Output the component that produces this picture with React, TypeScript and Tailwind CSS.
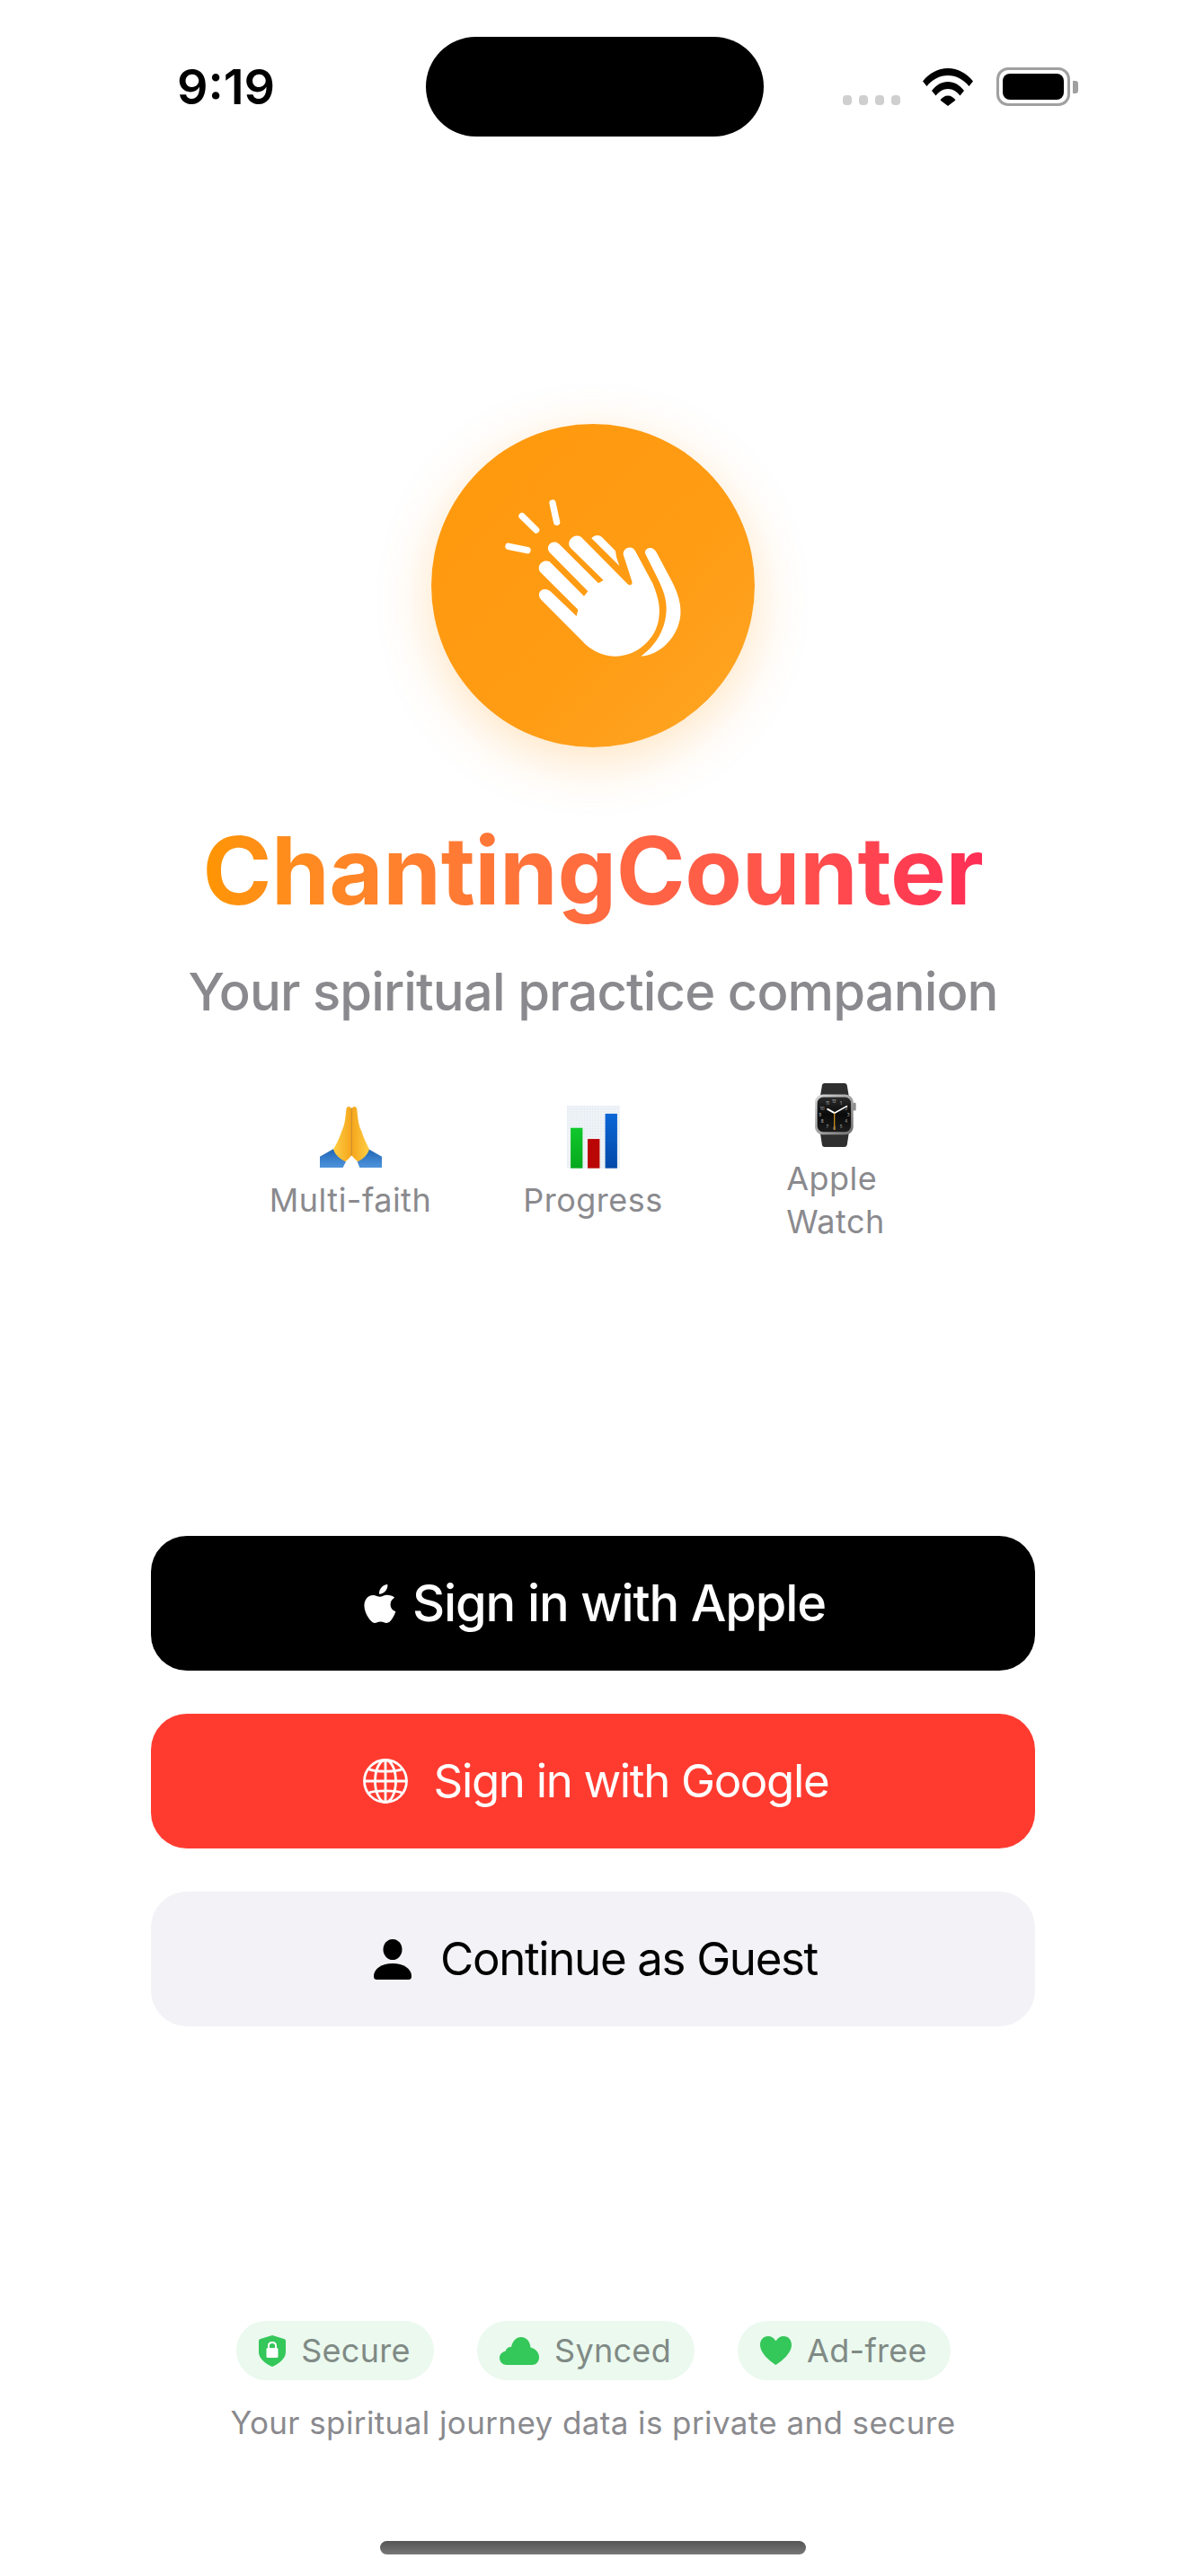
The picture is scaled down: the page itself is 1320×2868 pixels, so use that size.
import React from "react";

function ClapIcon() {
  return (
    <svg viewBox="120 96 1080 1080" className="w-[360px] h-[360px]">
      <g stroke="#fff" strokeWidth="22" strokeLinecap="round">
        <line x1="378" y1="505" x2="441" y2="518" />
        <line x1="423" y1="404" x2="470" y2="450" />
        <line x1="525" y1="360" x2="539" y2="424" />
      </g>
      <path
        fill="#fff"
        d="M487 683C470 665 485 640 510 650C514 652 517 654 520 657L605 738L610 716L485 592C468 572 492 545 515 556L630 671L643 655L515 525C498 505 525 478 547 497L678 628L695 618L585 510C568 490 595 460 620 473L775 630C782 638 794 634 790 622L762 535C755 512 790 495 802 522L860 630C880 680 885 710 880 745C870 820 800 875 730 872C690 872 650 850 625 822Z"
      />
      <path fill="#fff" d="M655 478C668 464 682 466 692 476L735 520L738 540L748 570Z" />
      <path
        fill="#fff"
        d="M835 530C828 512 858 498 872 525L925 625C945 665 955 700 952 735C945 810 880 870 820 872C870 835 905 780 905 710C905 670 885 630 870 600Z"
      />
    </svg>
  );
}

function PrayEmoji() {
  return (
    <svg viewBox="45 105 207 207" className="w-[69px] h-[69px]">
      <defs>
        <linearGradient id="sleeve" x1="0" y1="0" x2="0" y2="1">
          <stop offset="0" stopColor="#1f66b5" />
          <stop offset="1" stopColor="#4f94dc" />
        </linearGradient>
        <linearGradient id="handL" x1="0" y1="0" x2="1" y2="0">
          <stop offset="0" stopColor="#ffcf45" />
          <stop offset="1" stopColor="#f5a61c" />
        </linearGradient>
        <linearGradient id="handR" x1="1" y1="0" x2="0" y2="0">
          <stop offset="0" stopColor="#ffcf45" />
          <stop offset="1" stopColor="#f5a61c" />
        </linearGradient>
      </defs>
      <path fill="url(#sleeve)" d="M45 275L90 250L132 292L122 312H45Z" />
      <path fill="url(#sleeve)" d="M252 275L207 250L170 292L178 312H252Z" />
      <path fill="url(#handL)" d="M150 118C148 105 135 105 133 118C130 150 128 170 118 190C110 215 100 235 90 250C95 270 115 285 130 292C138 285 145 278 150 272Z" />
      <path fill="url(#handR)" d="M152 118C154 105 167 105 169 118C172 150 174 170 184 190C192 215 202 235 210 250C205 270 187 285 172 292C164 285 157 278 152 272Z" />
      <path stroke="#c9821a" strokeWidth="3" fill="none" d="M151 112V272" />
    </svg>
  );
}

function ChartEmoji() {
  return (
    <svg viewBox="725 152 115 204" preserveAspectRatio="none" className="w-[59px] h-[70px]">
      <defs>
        <pattern id="grid" width="6" height="9" patternUnits="userSpaceOnUse">
          <rect width="6" height="9" fill="#f0f4f8" />
          <path d="M0 0H6M0 0V9" stroke="#d3e0ea" strokeWidth="1" fill="none" />
        </pattern>
        <linearGradient id="green" x1="0" y1="0" x2="0" y2="1">
          <stop offset="0" stopColor="#10c82c" />
          <stop offset="1" stopColor="#06a81c" />
        </linearGradient>
        <linearGradient id="blue" x1="0" y1="0" x2="0" y2="1">
          <stop offset="0" stopColor="#0b66d6" />
          <stop offset="1" stopColor="#0449a8" />
        </linearGradient>
      </defs>
      <rect x="725" y="152" width="115" height="204" fill="url(#grid)" />
      <rect x="733" y="224" width="26" height="131" fill="url(#green)" />
      <rect x="770" y="260" width="26" height="95" fill="#bb0606" />
      <rect x="808" y="178" width="26" height="177" fill="url(#blue)" />
    </svg>
  );
}

function WatchEmoji() {
  const nums: [string, number, number][] = [
    ["12", 87, 94],
    ["1", 110, 100],
    ["2", 128, 118],
    ["3", 135, 140],
    ["4", 128, 163],
    ["5", 111, 180],
    ["6", 88, 186],
    ["7", 64, 180],
    ["8", 47, 163],
    ["9", 39, 140],
    ["10", 47, 118],
    ["11", 65, 100],
  ];
  return (
    <svg viewBox="22 32 140 216" className="w-[46px] h-[71px]">
      <defs>
        <linearGradient id="steel" x1="0" y1="0" x2="1" y2="1">
          <stop offset="0" stopColor="#dcdcdc" />
          <stop offset="1" stopColor="#6e6e6e" />
        </linearGradient>
        <linearGradient id="face" x1="0" y1="0" x2="0" y2="1">
          <stop offset="0" stopColor="#2c2c2c" />
          <stop offset="0.5" stopColor="#0a0a0a" />
          <stop offset="1" stopColor="#1c1c1c" />
        </linearGradient>
      </defs>
      <path fill="#2f2f2f" d="M46 40C46 35 50 32 55 32H122C127 32 130 35 131 40L137 76H40Z" />
      <path fill="#2f2f2f" d="M40 200H137L131 240C130 245 127 248 122 248H55C50 248 46 245 46 240Z" />
      <rect x="150" y="98" width="11" height="27" rx="3" fill="#8f8f8f" />
      <rect x="22" y="70" width="130" height="136" rx="26" fill="url(#steel)" />
      <rect x="30" y="79" width="114" height="118" rx="20" fill="url(#face)" />
      {nums.map(([t, x, y]) => (
        <text key={t} x={x} y={y} fontSize="14" textAnchor="middle" dominantBaseline="middle" fill="#b9b9b9" fontFamily="Inter, sans-serif">
          {t}
        </text>
      ))}
      <line x1="88" y1="133" x2="65" y2="120" stroke="#fff" strokeWidth="6" strokeLinecap="round" />
      <line x1="88" y1="133" x2="130" y2="110" stroke="#fff" strokeWidth="5" strokeLinecap="round" />
      <line x1="88" y1="133" x2="88" y2="190" stroke="#c88a1e" strokeWidth="4" />
    </svg>
  );
}

function AppleIcon() {
  return (
    <svg viewBox="0 0 36 44" className="w-[36px] h-[43px] shrink-0">
      <path
        fill="#fff"
        d="M26.500 0C26.800 3 25.700 5.800 24 7.800C22.300 9.800 19.600 11.300 17 11.100C16.600 8.200 18 5.200 19.500 3.500C21.200 1.500 24.200 0.200 26.500 0ZM34.500 15C31 17.100 29.800 20.100 29.800 23C29.800 26.800 32 29.600 35.800 31C34.800 34 33.400 36.800 31.600 39.400C29.900 41.800 28 44 25.400 44C22.800 44 22 42.500 18.600 42.500C15.200 42.500 14.200 44 11.800 44C9.200 44 7.200 41.500 5.400 39C2 34.200 0 28.600 0 24C0 17 4.600 12.200 10.200 12.200C13 12.200 15.400 14 17.800 14C20 14 22.800 12 26 12C28.800 12 32.300 12.800 34.500 15Z"
      />
    </svg>
  );
}

function GlobeIcon() {
  return (
    <svg viewBox="0 0 50 50" fill="none" stroke="#fff" strokeWidth="2.800" className="w-[50px] h-[50px] shrink-0">
      <circle cx="25" cy="25" r="23.500" />
      <ellipse cx="25" cy="25" rx="11.500" ry="23.500" />
      <line x1="25" y1="1.500" x2="25" y2="48.500" />
      <line x1="1.500" y1="25" x2="48.500" y2="25" />
      <path d="M6 11.500C12 15 38 15 44 11.500" />
      <path d="M6 38.500C12 35 38 35 44 38.500" />
    </svg>
  );
}

function PersonIcon() {
  return (
    <svg viewBox="0 0 42 45" className="w-[42px] h-[45px] shrink-0">
      <ellipse cx="21" cy="11.500" rx="10.500" ry="11.500" fill="#000" />
      <path fill="#000" d="M0 41C0 33 9 27 21 27C33 27 42 33 42 41C42 44 41 45 38 45H4C1 45 0 44 0 41Z" />
    </svg>
  );
}

function ShieldIcon() {
  return (
    <svg viewBox="0 0 30 35" className="w-[30px] h-[35px] shrink-0">
      <path fill="#34C759" d="M15 0L28 4C29 4.300 30 5 30 6.500V19C30 26 22 32 15 35C8 32 0 26 0 19V6.500C0 5 1 4.300 2 4Z" />
      <rect x="8.500" y="14" width="13" height="11" rx="1.500" fill="#fff" />
      <path d="M11 14.500V11.500C11 9.200 12.800 8 15 8C17.200 8 19 9.200 19 11.500V14.500" stroke="#fff" strokeWidth="2" fill="none" />
    </svg>
  );
}

function CloudIcon() {
  return (
    <svg viewBox="0 0 44 31" className="w-[44px] h-[31px] shrink-0">
      <path
        fill="#34C759"
        d="M8 31C3.500 31 0 27.800 0 23.300C0 19.400 2.800 16.300 6.500 15.700C7.500 12.300 10 10.800 13 11C14.500 4.500 18.500 0 24 0C30 0 34 5 34.500 11.500C40 13 44 17 44 22.500C44 27.800 40.500 31 36 31Z"
      />
    </svg>
  );
}

function HeartIcon() {
  return (
    <svg viewBox="0 0 35 32" className="w-[35px] h-[32px] shrink-0">
      <path
        fill="#34C759"
        d="M17.500 32C14 29.500 0 20.500 0 9.500C0 4 3.800 0 8.800 0C12.500 0 15.800 2 17.500 5.500C19.200 2 22.500 0 26.200 0C31.200 0 35 4 35 9.500C35 20.500 21 29.500 17.500 32Z"
      />
    </svg>
  );
}

function Feature({ icon, label, wrap }: { icon: React.ReactNode; label: React.ReactNode; wrap?: boolean }) {
  return (
    <div className="w-[270px] flex flex-col items-center">
      <div className="h-[70px] flex items-center justify-center">{icon}</div>
      <div
        className={
          wrap
            ? "mt-[12px] text-left text-[36px] leading-[48px] tracking-[0.5px] text-[#8a8a8e]"
            : "mt-[11px] text-center text-[36px] leading-[48px] tracking-[0.5px] text-[#8a8a8e]"
        }
      >
        {label}
      </div>
    </div>
  );
}

function Chip({ icon, label, w }: { icon: React.ReactNode; label: string; w: string }) {
  return (
    <div className={`${w} h-[66px] rounded-[33px] bg-[#ebf9ef] flex items-center justify-center gap-[17px] text-[36px] tracking-[0.3px] text-[#808a85]`}>
      {icon}
      <span>{label}</span>
    </div>
  );
}

export default function App() {
  return (
    <div className="w-[1320px] h-[2868px] bg-white flex flex-col items-center font-[Inter,sans-serif] overflow-hidden">
      {/* Status bar */}
      <div className="w-full h-[152px] pt-[41px] flex items-start">
        <div className="w-[474px] pl-[197px] pt-[29px] text-[54px] leading-[54px] font-semibold text-black">9:19</div>
        <div className="w-[376px] h-[111px] rounded-[56px] bg-black" />
        <div className="ml-[88px] mt-[34px] flex items-end">
          <div className="flex gap-[8px] pb-[1px]">
            <div className="w-[10px] h-[11px] rounded-[4px] bg-[#cfcfcf]" />
            <div className="w-[10px] h-[11px] rounded-[4px] bg-[#cfcfcf]" />
            <div className="w-[10px] h-[11px] rounded-[4px] bg-[#cfcfcf]" />
            <div className="w-[10px] h-[11px] rounded-[4px] bg-[#cfcfcf]" />
          </div>
          <svg viewBox="0 0 56 42" className="ml-[25px] w-[56px] h-[42px]">
            <path fill="#000" d="M0 14.500C7 5.500 17 0 28 0C39 0 49 5.500 56 14.500L51.500 20C45.500 12.500 37 8 28 8C19 8 10.500 12.500 4.500 20Z" />
            <path fill="#000" d="M10 25C15 18.500 21 15 28 15C35 15 41 18.500 46 25L41.500 30.500C38 26 33.500 23 28 23C22.500 23 18 26 14.500 30.500Z" />
            <path fill="#000" d="M19.500 35.500C21.500 32.500 24.500 30.500 28 30.500C31.500 30.500 34.500 32.500 36.500 35.500L28 42Z" />
          </svg>
          <div className="ml-[26px] flex items-center">
            <div className="w-[82px] h-[43px] rounded-[13px] border-[3px] border-[#a0a0a0] p-[4px]">
              <div className="w-full h-full rounded-[8px] bg-black" />
            </div>
            <div className="ml-[3px] w-[6px] h-[14px] rounded-r-[3px] bg-[#a0a0a0]" />
          </div>
        </div>
      </div>

      {/* Hero */}
      <div className="mt-[320px] w-[360px] h-[360px] rounded-full bg-gradient-to-br from-[#FF990C] via-[#FF9C14] via-60% to-[#FFA624] shadow-[0_15px_60px_rgba(255,149,0,0.25)]">
        <ClapIcon />
      </div>
      <h1 className="mt-[74px] text-[104px] leading-[126px] font-bold tracking-[-0.4px] bg-gradient-to-r from-[#FF9500] to-[#FF2D55] bg-clip-text text-transparent">
        ChantingCounter
      </h1>
      <p className="mt-[36px] text-[58px] leading-[72px] font-medium tracking-[-0.9px] text-[#8a8a8e]">Your spiritual practice companion</p>

      {/* Features */}
      <div className="mt-[66px] flex items-center">
        <Feature icon={<PrayEmoji />} label="Multi-faith" />
        <Feature icon={<ChartEmoji />} label="Progress" />
        <Feature
          wrap
          icon={<WatchEmoji />}
          label={
            <>
              Apple
              <br />
              Watch
            </>
          }
        />
      </div>

      {/* Buttons */}
      <div className="mt-[326px] w-[984px] flex flex-col gap-[48px]">
        <button className="h-[150px] pl-[4px] rounded-[40px] bg-black flex items-center justify-center gap-[18px] text-white text-[56px] tracking-[-1.15px] font-medium">
          <AppleIcon />
          <span>Sign in with Apple</span>
        </button>
        <button className="h-[150px] pl-[6px] rounded-[40px] bg-[#FF3B30] flex items-center justify-center gap-[29px] text-white text-[51px] tracking-[-1.35px]">
          <GlobeIcon />
          <span>Sign in with Google</span>
        </button>
        <button className="h-[150px] pl-[6px] rounded-[40px] bg-[#F2F2F7] flex items-center justify-center gap-[32px] text-black text-[51px] tracking-[-1.35px]">
          <PersonIcon />
          <span>Continue as Guest</span>
        </button>
      </div>

      {/* Footer */}
      <div className="mt-[328px] flex gap-[48px]">
        <Chip icon={<ShieldIcon />} label="Secure" w="w-[220px]" />
        <Chip icon={<CloudIcon />} label="Synced" w="w-[242px]" />
        <Chip icon={<HeartIcon />} label="Ad-free" w="w-[237px]" />
      </div>
      <p className="mt-[24px] text-[35px] leading-[46px] tracking-[0.4px] text-[#8a8a8e]">Your spiritual journey data is private and secure</p>

      <div className="mt-[109px] w-[474px] h-[15px] rounded-[8px] bg-gradient-to-b from-[#555555] to-[#777777]" />
    </div>
  );
}
